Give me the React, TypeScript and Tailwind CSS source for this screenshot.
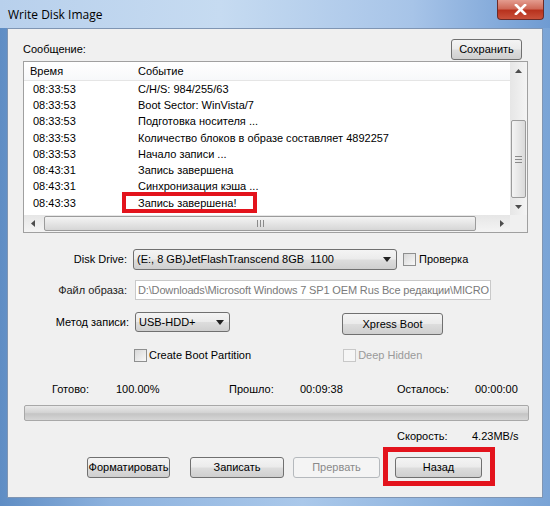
import React from "react";

const rows: [string, string][] = [
  ["08:33:53", "C/H/S: 984/255/63"],
  ["08:33:53", "Boot Sector: WinVista/7"],
  ["08:33:53", "Подготовка носителя ..."],
  ["08:33:53", "Количество блоков в образе составляет 4892257"],
  ["08:33:53", "Начало записи ..."],
  ["08:43:31", "Запись завершена"],
  ["08:43:31", "Синхронизация кэша ..."],
  ["08:43:33", "Запись завершена!"],
];

function Btn({
  children,
  className = "",
  disabled = false,
}: {
  children: React.ReactNode;
  className?: string;
  disabled?: boolean;
}) {
  return (
    <div
      className={`flex items-center justify-center overflow-hidden whitespace-nowrap rounded-[3px] border ${
        disabled
          ? "border-[#b5b9bd] bg-[#f4f4f4] text-[#8a8a8a]"
          : "border-[#707070] bg-[linear-gradient(#f4f4f4_0%,#ebebeb_48%,#dddddd_52%,#cfcfcf_100%)] text-black"
      } ${className}`}
    >
      {children}
    </div>
  );
}

function Check({ disabled = false }: { disabled?: boolean }) {
  return (
    <div
      className={`h-[13px] w-[13px] border ${
        disabled
          ? "border-[#c8c8c8] bg-[#f6f6f6]"
          : "border-[#8e8f8f] bg-[linear-gradient(135deg,#d8d8d8,#f8f8f8)]"
      }`}
    />
  );
}

function Combo({ text, className = "" }: { text: string; className?: string }) {
  return (
    <div
      className={`flex items-center justify-between rounded-[3px] border border-[#707070] bg-[linear-gradient(#f4f4f4_0%,#ebebeb_48%,#dddddd_52%,#cfcfcf_100%)] pl-[3px] pr-[5px] ${className}`}
    >
      <span className="whitespace-pre">{text}</span>
      <svg width="8" height="5" viewBox="0 0 8 5">
        <path d="M0 0h8L4 5z" fill="#222" />
      </svg>
    </div>
  );
}

function Arrow({ dir }: { dir: "up" | "down" | "left" | "right" }) {
  const d =
    dir === "up"
      ? "M0 4h7L3.5 0z"
      : dir === "down"
      ? "M0 0h7L3.5 4z"
      : dir === "left"
      ? "M4 0v7L0 3.5z"
      : "M0 0v7l4-3.5z";
  const w = dir === "up" || dir === "down" ? 7 : 4;
  const h = dir === "up" || dir === "down" ? 4 : 7;
  return (
    <svg width={w} height={h} viewBox={`0 0 ${w} ${h}`}>
      <path d={d} fill="#4d4d4d" />
    </svg>
  );
}

export default function App() {
  return (
    <div className="relative h-[506px] w-[550px] overflow-hidden bg-[linear-gradient(90deg,#5f8dc4,#8db2de_20%,#aac8ea_55%,#7aa4d6)] font-['Liberation_Sans',Arial,sans-serif] text-[11px] leading-[13px] text-black">
      {/* title bar */}
      <div className="flex h-[28px] items-start justify-between bg-[linear-gradient(90deg,#b8d0ec,#c6dbf1_40%,#a7c4e8_75%,#6f9bd2)]">
        <div className="pl-[8px] pt-[7px] font-['Open_Sans',sans-serif] text-[12px] leading-[15px] text-black">
          Write Disk Image
        </div>
        <div className="mr-[6px] flex h-[20px] w-[47px] items-center justify-center rounded-b-[4px] border border-t-0 border-[#6b2b28] bg-[linear-gradient(#e49c8f,#cf6a59_45%,#b8321e_55%,#c9503a)]">
          <svg width="13" height="11" viewBox="0 0 13 11">
            <path
              d="M2 1l9 9M11 1l-9 9"
              stroke="#fff"
              strokeWidth="2.6"
              strokeLinecap="square"
            />
          </svg>
        </div>
      </div>

      {/* client area */}
      <div className="mx-[7px] flex h-[470px] flex-col border border-[#7f95b3] bg-[#f0f0f0]">
        {/* top row */}
        <div className="mt-[10px] flex items-center justify-between pl-[15px] pr-[20px]">
          <span>Сообщение:</span>
          <Btn className="h-[21px] w-[71px]">Сохранить</Btn>
        </div>

        {/* list box */}
        <div className="relative ml-[15px] mt-[1px] flex h-[172px] w-[505px] flex-col border border-[#a0a0a0] bg-white">
          <div className="flex h-[154px]">
            <div className="flex-1">
              <div className="flex h-[19px] items-center border-b border-[#e5e5e5] bg-[linear-gradient(#ffffff,#f7f8fa)]">
                <span className="w-[114px] pl-[6px]">Время</span>
                <span>Событие</span>
              </div>
              {rows.map(([t, e], i) => (
                <div key={i} className="flex h-[16.3px] items-center">
                  <span className="w-[114px] pl-[9px]">{t}</span>
                  <span className="whitespace-nowrap">{e}</span>
                </div>
              ))}
            </div>
            {/* vertical scrollbar */}
            <div className="flex w-[17px] flex-col items-center bg-[linear-gradient(90deg,#e6e6e6,#f4f4f4)]">
              <div className="flex h-[17px] items-center justify-center">
                <Arrow dir="up" />
              </div>
              <div className="mt-[41px] flex h-[78px] w-[15px] flex-col items-center justify-center gap-[2px] rounded-[2px] border border-[#9b9b9b] bg-[linear-gradient(90deg,#f4f4f4,#dadada)]">
                <div className="h-px w-[7px] bg-[#8a8a8a]" />
                <div className="h-px w-[7px] bg-[#8a8a8a]" />
                <div className="h-px w-[7px] bg-[#8a8a8a]" />
              </div>
              <div className="mt-auto flex h-[17px] items-center justify-center">
                <Arrow dir="down" />
              </div>
            </div>
          </div>
          {/* horizontal scrollbar */}
          <div className="flex h-[17px]">
            <div className="flex flex-1 items-center bg-[linear-gradient(#e6e6e6,#f4f4f4)]">
              <div className="flex w-[17px] justify-center">
                <Arrow dir="left" />
              </div>
              <div className="ml-[3px] flex h-[15px] w-[432px] items-center justify-center gap-[2px] rounded-[2px] border border-[#9b9b9b] bg-[linear-gradient(#f4f4f4,#d6d6d6)]">
                <div className="h-[7px] w-px bg-[#8a8a8a]" />
                <div className="h-[7px] w-px bg-[#8a8a8a]" />
                <div className="h-[7px] w-px bg-[#8a8a8a]" />
              </div>
              <div className="ml-auto flex w-[17px] justify-center">
                <Arrow dir="right" />
              </div>
            </div>
            <div className="w-[17px] bg-[#f0f0f0]" />
          </div>
          {/* annotation box */}
          <div className="absolute left-[98px] top-[130px] h-[21px] w-[135px] border-[4px] border-[#e3131c]" />
        </div>

        {/* Disk Drive */}
        <div className="mt-[16px] flex items-center">
          <span className="w-[119px] text-right">Disk Drive:</span>
          <Combo
            text="(E:, 8 GB)JetFlashTranscend 8GB  1100"
            className="ml-[6px] h-[21px] w-[264px]"
          />
          <div className="ml-[6px]">
            <Check />
          </div>
          <span className="ml-[3px]">Проверка</span>
        </div>

        {/* image file */}
        <div className="mt-[10px] flex items-center">
          <span className="w-[119px] text-right text-[#222]">Файл образа:</span>
          <div className="ml-[8px] flex h-[20px] w-[356px] items-center overflow-hidden whitespace-nowrap border border-[#c9c9c9] bg-white pl-[2px] tracking-[-0.15px] text-[#7a7a7a]">
            D:\Downloads\Microsoft Windows 7 SP1 OEM Rus Все редакции\MICRO
          </div>
        </div>

        {/* write method */}
        <div className="mt-[11px] flex items-start">
          <span className="mt-[5px] w-[121px] text-right">Метод записи:</span>
          <Combo text="USB-HDD+" className="ml-[6px] mt-[1px] h-[20px] w-[95px]" />
          <Btn className="ml-[112px] mt-[2px] h-[22px] w-[101px]">Xpress Boot</Btn>
        </div>

        {/* checkboxes */}
        <div className="mt-[14px] flex items-center">
          <div className="ml-[126px]">
            <Check />
          </div>
          <span className="ml-[2px]">Create Boot Partition</span>
          <div className="ml-[92px]">
            <Check disabled />
          </div>
          <span className="ml-[2px] text-[#9a9a9a]">Deep Hidden</span>
        </div>

        {/* stats */}
        <div className="mt-[21px] flex pl-[44px]">
          <span className="w-[64px]">Готово:</span>
          <span className="w-[113px]">100.00%</span>
          <span className="w-[71px]">Прошло:</span>
          <span className="w-[97px]">00:09:38</span>
          <span className="w-[78px]">Осталось:</span>
          <span>00:00:00</span>
        </div>

        {/* progress */}
        <div className="ml-[16px] mt-[9px] h-[16px] w-[505px] rounded-[2px] border border-[#a8a8a8] bg-[linear-gradient(#e9e9e9,#d2d2d2_50%,#c4c4c4_55%,#d6d6d6)]" />

        {/* speed */}
        <div className="mt-[9px] flex pl-[389px]">
          <span className="w-[75px]">Скорость:</span>
          <span>4.23MB/s</span>
        </div>

        {/* buttons */}
        <div className="relative mt-[14px] flex">
          <Btn className="ml-[79px] h-[21px] w-[83px] border-[#3c3c3c]">
            Форматировать
          </Btn>
          <Btn className="ml-[20px] h-[21px] w-[94px]">Записать</Btn>
          <Btn disabled className="ml-[9px] h-[21px] w-[87px]">
            Прервать
          </Btn>
          <Btn className="ml-[15px] h-[21px] w-[87px]">Назад</Btn>
          <div className="absolute left-[375px] top-[-10px] h-[39px] w-[112px] border-[5px] border-[#e3131c]" />
        </div>
      </div>
    </div>
  );
}
